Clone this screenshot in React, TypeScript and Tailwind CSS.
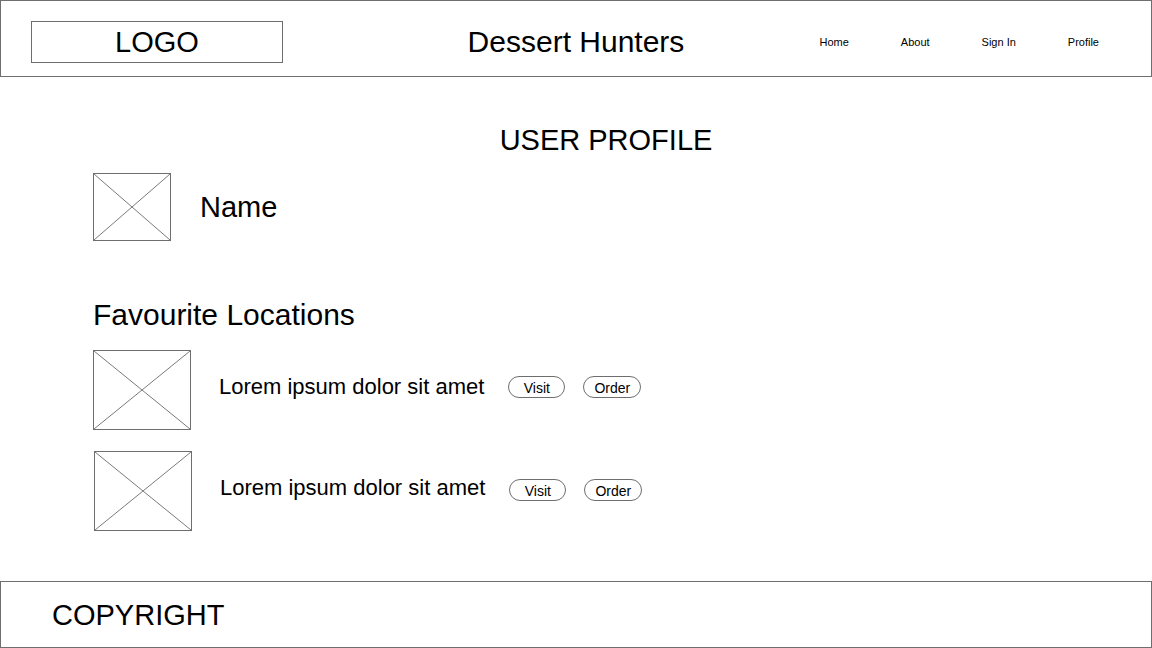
import React from 'react';

// Wireframe image placeholder: box with a cross
const ImagePlaceholder: React.FC<{ className?: string }> = ({ className }) => (
  <div className={`relative shrink-0 border border-[#6e6e6e] ${className ?? ''}`}>
    <svg
      className="absolute inset-0 h-full w-full"
      viewBox="0 0 100 100"
      preserveAspectRatio="none"
    >
      <line x1="0" y1="0" x2="100" y2="100" stroke="#7a7a7a" strokeWidth="1" vectorEffect="non-scaling-stroke" />
      <line x1="100" y1="0" x2="0" y2="100" stroke="#7a7a7a" strokeWidth="1" vectorEffect="non-scaling-stroke" />
    </svg>
  </div>
);

const PillButton: React.FC<{ label: string; className?: string }> = ({ label, className }) => (
  <button
    className={`flex h-[22px] items-center justify-center rounded-full border border-[#6e6e6e] pt-[1px] text-[14px] leading-none text-black ${className ?? ''}`}
  >
    {label}
  </button>
);

const locations = [
  { id: 1, text: 'Lorem ipsum dolor sit amet', rowPad: '', btnShift: '-mt-[6px]' },
  { id: 2, text: 'Lorem ipsum dolor sit amet', rowPad: 'pl-[1px]', btnShift: '-mt-[2px]' },
];

export default function App() {
  const navItems = ['Home', 'About', 'Sign In', 'Profile'];

  return (
    <div
      className="flex h-screen w-full flex-col bg-white text-black"
      style={{ fontFamily: '"Liberation Sans", Arial, sans-serif' }}
    >
      {/* Header */}
      <header className="grid h-[77px] shrink-0 grid-cols-3 items-center border border-[#6e6e6e] pt-[6px]">
        <div className="pl-[30px]">
          <div className="flex h-[42px] w-[252px] items-center justify-center border border-[#6e6e6e] pt-[3px] text-[29px]">
            LOGO
          </div>
        </div>
        <h1 className="text-center text-[30px] leading-none">Dessert Hunters</h1>
        <nav className="flex items-center justify-end gap-[52px] pr-[52px] pt-[2px] text-[11px]">
          {navItems.map(item => (
            <a key={item} className="cursor-pointer">
              {item}
            </a>
          ))}
        </nav>
      </header>

      {/* Main content */}
      <main className="flex-1 pl-[93px]">
        <h2 className="mt-[46px] pr-[33px] text-center text-[29px] leading-[34px]">
          USER PROFILE
        </h2>

        <div className="mt-[16px] flex items-center gap-[29px]">
          <ImagePlaceholder className="h-[68px] w-[78px]" />
          <span className="text-[29px] leading-none">Name</span>
        </div>

        <h3 className="mt-[56px] text-[30px] leading-[36px]">Favourite Locations</h3>

        <div className="mt-[17px] flex flex-col gap-[21px]">
          {locations.map(loc => (
            <div key={loc.id} className={`flex items-center ${loc.rowPad}`}>
              <ImagePlaceholder className="h-[80px] w-[98px]" />
              <span className="ml-[28px] -mt-[7px] text-[22px] leading-none">{loc.text}</span>
              <PillButton label="Visit" className={`ml-[24px] w-[57px] ${loc.btnShift}`} />
              <PillButton label="Order" className={`ml-[18px] w-[58px] ${loc.btnShift}`} />
            </div>
          ))}
        </div>
      </main>

      {/* Footer */}
      <footer className="flex h-[67px] shrink-0 items-center border border-[#6e6e6e] pl-[51px] pt-[2px]">
        <span className="text-[29px] leading-none">COPYRIGHT</span>
      </footer>
    </div>
  );
}
